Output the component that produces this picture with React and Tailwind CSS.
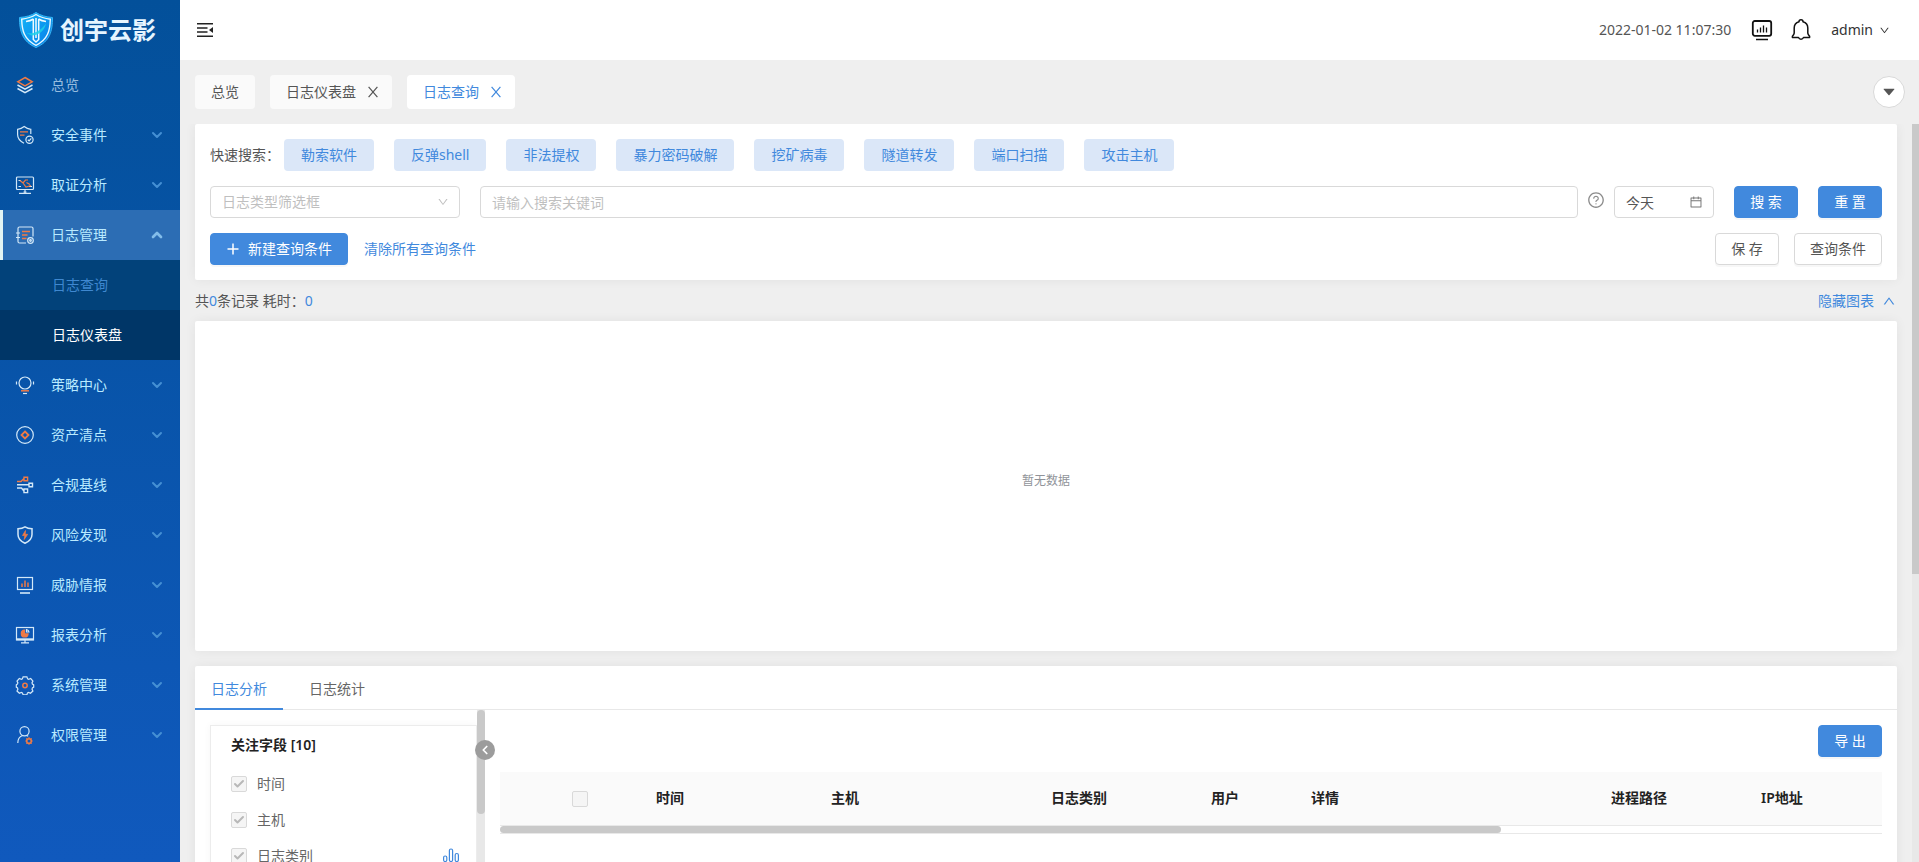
import { useState } from "react";
import { AiOutlineCalendar, AiOutlineDown, AiOutlineQuestionCircle, AiOutlineUp, AiFillCaretDown } from "react-icons/ai";
import { Check, ChevronDown, ChevronLeft, ChevronUp } from "lucide-react";
import clsx from "clsx";

const O = "#ef7a45";

const ICONS = {
  overview: (
    <>
      <path d="M10 2.5 17.2 6.8 10 11 2.8 6.8Z" stroke={O} strokeWidth="1.500" />
      <path d="M2.5 10 10 14.2 17.5 10M2.5 13.500 10 17.700 17.5 13.500" strokeWidth="1.500" />
    </>
  ),
  event: (
    <>
      <path d="M9 18.2C5 16.2 2.6 13.6 2.6 9.500V4.300C5.400 4 7.400 3 9.200 1.500 11 3 13 4 15.800 4.300V9" />
      <path d="M5 6.800h8M5 10.200h4.500" stroke={O} />
      <circle cx="14.500" cy="14.700" r="3.600" />
      <path d="m12.800 14.800 1.300 1.200 2.200-2.600" />
    </>
  ),
  forensic: (
    <>
      <rect x="1.500" y="2" width="17" height="12.500" rx="1" />
      <path d="M3.500 5.500h2.500M3.500 11.500h2.500M14 11.500h3" />
      <path d="M5 5.500 8 8l2.500-3L13 5M8 8l3 4 5-1.500M11.500 7.500l3.500 2" stroke={O} />
      <path d="M10 14.500v4M4 18.300h12M8.500 17h3" />
    </>
  ),
  log: (
    <>
      <path d="M18 11.500V3.500a1.500 1.500 0 0 0-1.500-1.500h-12A1.500 1.500 0 0 0 3 3.500v13A1.500 1.500 0 0 0 4.500 18H11M1 8h4M1 12.500h4" />
      <path d="M7 6.500h8M7 10h5.500M7 13.500h4.500" stroke={O} strokeWidth="1.500" />
      <circle cx="15.500" cy="15.500" r="2.800" />
      <circle cx="15.500" cy="15.500" r=".8" />
    </>
  ),
  policy: (
    <>
      <circle cx="10" cy="8" r="6" />
      <path d="M1.500 6.500v3M18.500 6.500v3" />
      <path d="M6 15.800h8" stroke={O} strokeWidth="1.500" />
      <path d="M8 18.500h4" />
    </>
  ),
  asset: (
    <>
      <circle cx="10" cy="10" r="8.300" />
      <path d="m10 6.500 3.500 3.500-3.500 3.500L6.500 10Z" stroke={O} strokeWidth="1.800" />
    </>
  ),
  baseline: (
    <>
      <path d="M2 6.500h4L8.500 4H9M9 2.200h3.600v3.600H9Z" stroke={O} strokeWidth="1.400" />
      <path d="M2 9.800h12M14 8.200h3.500v3.500H14ZM2 13h4.500l2 2.500H9M9 14h3.600v3.600H9Z" strokeWidth="1.400" />
    </>
  ),
  risk: (
    <>
      <path d="M10 1.800C12 3 14.500 3.600 17 3.800V9.500C17 14 14 16.500 10 18.300 6 16.500 3 14 3 9.500V3.800C5.500 3.600 8 3 10 1.800Z" strokeWidth="1.500" />
      <path d="M10.500 5.500 7.500 10.500h2.300l-.6 4 3.500-5.200h-2.500Z" fill={O} stroke={O} strokeWidth=".7" />
    </>
  ),
  threat: (
    <>
      <rect x="2.500" y="2.500" width="15" height="12" />
      <path d="M5 18h10" strokeWidth="1.600" />
      <path d="M7 8.500v3.500M10 5.500V12M13 7.500v4.500" stroke={O} strokeWidth="1.500" />
    </>
  ),
  report: (
    <>
      <rect x="1.500" y="2.500" width="17" height="12.500" />
      <path d="M1.500 14.200h17" strokeWidth="1.800" />
      <path d="M9.500 5.200a3.400 3.400 0 1 0 3.600 3.700H9.500Z" fill={O} stroke={O} />
      <path d="M11.500 7V4.500a3 3 0 0 1 2.500 2.500ZM10 15v2.500M6 17.900h8" />
    </>
  ),
  system: (
    <>
      <path d="M8.100 1.800h3.800l.7 2.100 1.100.5 2-.9 2.200 2.500-.9 1.900.4 1.100 1.300.9v2.200l-1.300.8-.4 1.200.9 1.900-2.400 2.300-1.900-.8-1.100.4-.6 1.900H8.100l-.7-1.900-1.100-.4-1.900.8L2 16l.9-1.900-.4-1.200-1.200-.8V9.900l1.200-.9.4-1.100L2 6l2.300-2.500 2 .9 1.100-.5Z" />
      <circle cx="10" cy="10.500" r="2.200" stroke={O} strokeWidth="1.500" />
    </>
  ),
  auth: (
    <>
      <circle cx="9.500" cy="6.200" r="4.600" />
      <path d="M2.800 18c0-4 2-6.500 4.700-7.500M11.700 10.400l1.500.9" />
      <circle cx="14" cy="16" r="2.300" stroke={O} strokeWidth="1.600" />
      <path d="M14 12.300v1M14 18.700v1M10.300 16h1M16.700 16h1M11.400 13.400l.7.700M15.900 17.900l.7.700M16.600 13.400l-.7.700M12.100 17.900l-.7.700" stroke={O} />
    </>
  ),
};

const MENU = [
  { key: "overview", label: "总览", leaf: true },
  { key: "event", label: "安全事件" },
  { key: "forensic", label: "取证分析" },
  { key: "log", label: "日志管理", children: ["日志查询", "日志仪表盘"] },
  { key: "policy", label: "策略中心" },
  { key: "asset", label: "资产清点" },
  { key: "baseline", label: "合规基线" },
  { key: "risk", label: "风险发现" },
  { key: "threat", label: "威胁情报" },
  { key: "report", label: "报表分析" },
  { key: "system", label: "系统管理" },
  { key: "auth", label: "权限管理" },
];

const QUICK = ["勒索软件", "反弹shell", "非法提权", "暴力密码破解", "挖矿病毒", "隧道转发", "端口扫描", "攻击主机"];

const FIELDS = [
  { label: "时间" },
  { label: "主机" },
  { label: "日志类别", chart: true },
];

const COLUMNS = [
  { label: "时间", width: "w-[175px]" },
  { label: "主机", width: "w-[220px]" },
  { label: "日志类别", width: "w-[160px]" },
  { label: "用户", width: "w-[100px]" },
  { label: "详情", width: "w-[300px]" },
  { label: "进程路径", width: "w-[150px]" },
  { label: "IP地址", width: "w-[665px]" },
];

function MenuIcon({ name }) {
  return (
    <svg viewBox="0 0 20 20" className="w-5 h-5 shrink-0" fill="none" stroke="#d3e8f8" strokeWidth="1.200" aria-hidden="true">
      {ICONS[name]}
    </svg>
  );
}

function Logo() {
  return (
    <svg viewBox="0 0 36 38" className="w-9 h-[38px]" aria-hidden="true">
      <defs>
        <linearGradient id="shield" x1="0" y1="0" x2="1" y2="1">
          <stop offset="0" stopColor="#14b8f8" />
          <stop offset="1" stopColor="#087be8" />
        </linearGradient>
      </defs>
      <path d="M18 1.500C22.500 4.500 28 6 34.500 6.500 34.500 20 32 30.500 18 36.500 4 30.500 1.500 20 1.500 6.500 8 6 13.500 4.500 18 1.500Z" fill="url(#shield)" stroke="#35b5f5" strokeWidth="1" />
      <path d="M18 3.500C22 6 26.500 7.500 32.300 8.200 32 19.500 30 28.500 18 34.300 6 28.500 4 19.500 3.700 8.200 9.500 7.500 14 6 18 3.500Z" fill="none" stroke="#e8f8ff" strokeWidth="1.400" />
      <path d="M8 10.500c3-.3 5.500-1.200 7.500-2.500M28 10.500c-3-.3-5.500-1.200-7.500-2.500M15.300 8v20.500l2.700 2.500 2.700-2.500V8M18 7v20" stroke="#eefaff" strokeWidth="1.500" fill="none" />
      <path d="M8.500 22c7 1.500 14-2 19.500-9.500-1.500 8-8 12-14.500 12" fill="#1fd0e8" fillOpacity=".85" />
    </svg>
  );
}

function Sidebar() {
  const [open, setOpen] = useState("log");

  return (
    <aside className="w-[180px] shrink-0 bg-linear-to-b from-[#03509a] to-[#1059bd] text-[#b9eaff]">
      <div className="h-[60px] flex items-center gap-1.5 pl-[18px]">
        <Logo />
        <span className="text-2xl leading-6 font-bold text-[#e6f5ff] whitespace-nowrap">创宇云影</span>
      </div>
      <nav>
        {MENU.map(m => {
          const active = m.key === open;
          return (
            <div key={m.key}>
              <button
                type="button"
                onClick={() => !m.leaf && setOpen(active ? "" : m.key)}
                className={clsx("w-full h-[50px] flex items-center pr-[15px] border-l-[3px]", active ? "bg-[#2c6db4] border-[#e3f4f4]" : "border-transparent", m.leaf && "text-[#96bcdf]")}
              >
                <span className="pl-3 pr-4"><MenuIcon name={m.key} /></span>
                <span className="flex-1 text-left">{m.label}</span>
                {!m.leaf && (active ? <ChevronUp size={16} strokeWidth={4} className="text-[#83bdea]" /> : <ChevronDown size={16} strokeWidth={3} className="text-[#4590d4]" />)}
              </button>
              {active && m.children && m.children.map((c, i) => (
                <a key={c} href="#" className={clsx("h-[50px] flex items-center pl-[52px]", i === 0 ? "bg-[#02427a] text-[#3f88d0]" : "bg-[#003667] text-white")}>{c}</a>
              ))}
            </div>
          );
        })}
      </nav>
    </aside>
  );
}

function Header() {
  return (
    <header className="h-[60px] shrink-0 bg-white flex items-center pl-[17px] pr-[29px]">
      <button type="button" aria-label="收起菜单">
        <svg viewBox="0 0 16 14" className="w-4 h-3.5" fill="none" stroke="#222" strokeWidth="1.500" aria-hidden="true">
          <path d="M0 .8h16M0 5h10.500M0 9h10.500M0 13.200h16" />
          <path d="M16 4v6l-4-3Z" fill="#222" stroke="none" />
        </svg>
      </button>
      <div className="ml-auto flex items-center">
        <time className="text-[#555]">2022-01-02 11:07:30</time>
        <button type="button" aria-label="大屏" className="ml-5">
          <svg viewBox="0 0 22 22" className="w-[22px] h-[22px]" fill="none" stroke="#111" strokeWidth="1.800" aria-hidden="true">
            <rect x="1.800" y="2" width="18.400" height="14.800" rx="2" />
            <path d="M5 20.500h12" strokeWidth="1.500" />
            <path d="M6.500 10.500v3M9.500 8.500v5M12.500 6.500v7M15.500 8.500v5" strokeWidth="1.300" />
          </svg>
        </button>
        <button type="button" aria-label="通知" className="ml-[18px]">
          <svg viewBox="0 0 20 22" className="w-5 h-[22px]" fill="none" stroke="#111" strokeWidth="1.500" strokeLinejoin="round" aria-hidden="true">
            <path d="M8 2.800a2 2 0 0 1 4 0c3 .9 4.800 3.200 4.800 6.200v5.200c.2 1.500 1 2.300 1.800 3.100v1.200H12.500a2.700 2.700 0 0 1-5 0H1.400v-1.200c.8-.8 1.600-1.600 1.800-3.100V9c0-3 1.800-5.300 4.800-6.200Z" />
          </svg>
        </button>
        <button type="button" className="ml-5 flex items-center gap-1.5 text-[#333]">
          admin <AiOutlineDown size={11} />
        </button>
      </div>
    </header>
  );
}

function CloseMark() {
  return (
    <svg viewBox="0 0 10 12" className="w-2.5 h-3" fill="none" stroke="currentColor" strokeWidth="1.200" aria-hidden="true">
      <path d="M.6.8 9.400 11.200M9.400.8.6 11.200" />
    </svg>
  );
}

function PageTabs() {
  return (
    <div className="shrink-0 flex items-center gap-[15px] p-[15px] pr-3.5">
      <button type="button" className="h-[34px] px-4 rounded bg-[#fafafa] text-[#555]">总览</button>
      <button type="button" className="h-[34px] pl-4 pr-3.5 rounded flex items-center gap-3 bg-[#fafafa] text-[#555]">日志仪表盘 <CloseMark /></button>
      <button type="button" className="h-[34px] pl-4 pr-3.5 rounded flex items-center gap-3 bg-white text-[#4189dd]">日志查询 <CloseMark /></button>
      <button type="button" aria-label="更多标签" className="ml-auto w-8 h-8 rounded-full bg-white border border-[#d9d9d9] flex items-center justify-center text-[#555]">
        <AiFillCaretDown size={16} />
      </button>
    </div>
  );
}

function Button({ children, plain, className }) {
  return (
    <button
      type="button"
      className={clsx("h-8 px-[15px] shrink-0 rounded border flex items-center justify-center gap-2 shadow-[0_2px_0_rgba(0,0,0,0.03)] whitespace-nowrap", plain ? "bg-white border-[#d9d9d9] text-[#555]" : "bg-[#4189dd] border-[#4189dd] text-white", className)}
    >
      {children}
    </button>
  );
}

function SearchCard() {
  return (
    <section className="bg-white rounded-xs p-[15px] space-y-[15px] shadow-[0_0_12px_rgba(0,0,0,0.06)]">
      <div className="flex items-center">
        <span className="w-[74px] whitespace-nowrap text-[#555]">快速搜索：</span>
        <div className="flex gap-5">
          {QUICK.map(q => (
            <button key={q} type="button" className="h-8 px-[17px] rounded bg-[#dbe7f8] text-[#4189dd] whitespace-nowrap">{q}</button>
          ))}
        </div>
      </div>

      <div className="flex items-center">
        <div className="relative w-[250px] shrink-0">
          <select aria-label="日志类型筛选框" className="appearance-none w-full h-8 px-[11px] rounded border border-[#d9d9d9] bg-white text-[#bfbfbf]">
            <option>日志类型筛选框</option>
          </select>
          <AiOutlineDown size={12} className="absolute right-[11px] top-2.5 text-[#bfbfbf] pointer-events-none" />
        </div>
        <input aria-label="搜索关键词" placeholder="请输入搜索关键词" className="ml-5 flex-1 min-w-0 h-8 px-[11px] rounded border border-[#d9d9d9] placeholder:text-[#bfbfbf]" />
        <AiOutlineQuestionCircle size={18} className="mx-[9px] mb-1 shrink-0 text-[#8c8c8c]" />
        <div className="relative w-[100px] shrink-0">
          <input aria-label="时间范围" readOnly value="今天" className="w-full h-8 px-[11px] rounded border border-[#d9d9d9] text-[#555]" />
          <AiOutlineCalendar size={14} className="absolute right-[11px] top-[9px] text-[#777] pointer-events-none" />
        </div>
        <Button className="ml-5 w-16">搜 索</Button>
        <Button className="ml-5 w-16">重 置</Button>
      </div>

      <div className="flex items-center">
        <Button>
          <svg viewBox="0 0 14 14" className="w-3.5 h-3.5" fill="none" stroke="currentColor" strokeWidth="1.500" aria-hidden="true">
            <path d="M7 1.500v11M1.500 7h11" />
          </svg>
          新建查询条件
        </Button>
        <a href="#" className="ml-4 text-[#4189dd]">清除所有查询条件</a>
        <Button plain className="ml-auto w-16">保 存</Button>
        <Button plain className="ml-[15px]">查询条件</Button>
      </div>
    </section>
  );
}

function CheckBox({ id, checked, label }) {
  return (
    <span className="relative inline-block align-middle w-4 h-4">
      <input id={id} type="checkbox" aria-label={label} disabled defaultChecked={checked} className="appearance-none block w-4 h-4 rounded-xs border border-[#d9d9d9] bg-[#f5f5f5]" />
      {checked && <Check size={12} strokeWidth={4} className="absolute left-0.5 top-0.5 text-[#b8b8b8]" />}
    </span>
  );
}

function FieldPanel() {
  return (
    <div className="relative w-[290px] min-h-[420px] shrink-0 flex">
      <div className="flex-1 pl-[15px] pt-[15px]">
        <div className="h-full border border-[#ececec] shadow-[0_0_8px_rgba(0,0,0,0.04)] pl-5 pr-[17px] pt-2">
          <h3 className="font-semibold text-[#222]">关注字段 [10]</h3>
          <ul className="pt-2.5">
            {FIELDS.map((f, i) => (
              <li key={f.label} className="h-9 flex items-center">
                <CheckBox id={`field-${i}`} checked />
                <label htmlFor={`field-${i}`} className="ml-2.5 flex-1 text-[#666]">{f.label}</label>
                {f.chart && (
                  <svg viewBox="0 0 16 16" className="w-4 h-4" fill="none" stroke="#4189dd" strokeWidth="1.200" aria-hidden="true">
                    <rect x=".6" y="8" width="3.200" height="5.500" rx="1.500" />
                    <rect x="6.400" y="1" width="3.200" height="12.500" rx="1.500" />
                    <rect x="12.200" y="5.500" width="3.200" height="8" rx="1.500" />
                  </svg>
                )}
              </li>
            ))}
          </ul>
        </div>
      </div>
      <div className="w-2 bg-[#e8e8e8]">
        <div className="h-[104px] rounded-full bg-[#c9c9c9]" />
      </div>
      <button type="button" aria-label="收起字段" className="absolute -right-2.5 top-[30px] w-5 h-5 rounded-full bg-[#9c9c9c] text-white flex items-center justify-center">
        <ChevronLeft size={14} strokeWidth={3} />
      </button>
    </div>
  );
}

function ResultTable() {
  return (
    <div className="flex-1 min-w-0 p-[15px]">
      <div className="flex justify-end">
        <Button className="w-16">导 出</Button>
      </div>
      <div className="mt-[15px] overflow-hidden border-b border-[#e8e8e8]">
        <table className="table-fixed w-[1910px] text-[#222]">
          <thead>
            <tr className="h-[53px] bg-[#fafafa] border-b border-[#e8e8e8]">
              <th className="w-[50px]" />
              <th className="w-[60px]"><CheckBox label="全选" /></th>
              <th className="w-[30px]" />
              {COLUMNS.map(c => (
                <th key={c.label} scope="col" className={clsx("px-4 text-left font-semibold", c.width)}>{c.label}</th>
              ))}
            </tr>
          </thead>
        </table>
        <div className="h-[7px] w-[72.4%] rounded-full bg-[#c9c9c9]" />
      </div>
    </div>
  );
}

export default function App() {
  const [tab, setTab] = useState("日志分析");
  const [showChart, setShowChart] = useState(true);

  return (
    <div className="h-screen flex overflow-hidden bg-[#efefef] text-sm leading-[22px] font-['Noto_Sans','Noto_Sans_CJK_SC',sans-serif]">
      <Sidebar />
      <div className="flex-1 min-w-0 flex flex-col">
        <Header />
        <PageTabs />
        <div className="flex-1 min-h-0 flex">
          <main className="flex-1 min-w-0 overflow-hidden px-[15px]">
            <SearchCard />
            <div className="h-[41px] flex items-center justify-between text-[#555]">
              <p>共<span className="text-[#4189dd]">0</span>条记录 耗时：<span className="text-[#4189dd]">0</span></p>
              <button type="button" onClick={() => setShowChart(!showChart)} className="flex items-center gap-2 pr-px text-[#4189dd]">
                隐藏图表 <AiOutlineUp size={14} />
              </button>
            </div>
            {showChart && (
              <section className="h-[330px] mb-[15px] bg-white rounded-xs shadow-[0_0_12px_rgba(0,0,0,0.06)] flex items-center justify-center pb-2.5 text-xs text-[#909399]">
                暂无数据
              </section>
            )}
            <section className="bg-white rounded-xs shadow-[0_0_12px_rgba(0,0,0,0.06)]">
              <div className="h-11 flex gap-2.5 border-b border-[#e8e8e8]">
                {["日志分析", "日志统计"].map(t => (
                  <button
                    key={t}
                    type="button"
                    onClick={() => setTab(t)}
                    className={clsx("h-11 px-4 pt-1 border-b-2", t === tab ? "border-[#4189dd] text-[#4189dd]" : "border-transparent text-[#666]")}
                  >
                    {t}
                  </button>
                ))}
              </div>
              <div className="flex">
                <FieldPanel />
                <ResultTable />
              </div>
            </section>
          </main>
          <div className="w-[7px] shrink-0 bg-[#e8e8e8]">
            <div className="h-[61%] bg-[#c9c9c9]" />
          </div>
        </div>
      </div>
    </div>
  );
}
